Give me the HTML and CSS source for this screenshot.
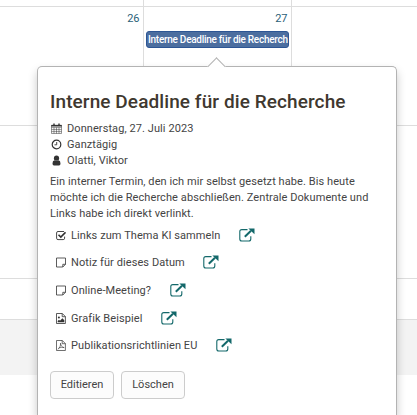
FILE: index.html
```html
<!DOCTYPE html>
<html lang="de">
<head>
<meta charset="utf-8">
<title>Kalender</title>
<link rel="stylesheet" href="styles.css">
</head>
<body>
<svg class="sprite" aria-hidden="true">
  <symbol id="open" viewBox="0 0 16 14">
    <path d="M8.5 1.6H2.8Q.8 1.6.8 3.6V11Q.8 13 2.8 13H9.8Q11.8 13 11.8 11V8.2" fill="none" stroke="currentColor" stroke-width="1.1"/>
    <path d="M5.8 8.8 12 2.7" fill="none" stroke="currentColor" stroke-width="2"/>
    <path d="M9.4.5h6.1v5.8z" fill="currentColor"/>
  </symbol>
  <symbol id="note" viewBox="0 0 10 11">
    <path d="M.5 1h9v6.3L6.8 10H.5zM9.5 7.3H6.8V10" fill="none" stroke="currentColor" stroke-width=".8"/>
  </symbol>
</svg>
<main class="calendar">
  <div class="week week-prev"><div></div><div></div><div></div></div>
  <div class="week week-current">
    <div class="day"><a class="num">26</a></div>
    <div class="day"><a class="num">27</a><div class="event">Interne Deadline für die Recherch</div></div>
    <div class="day"></div>
  </div>
  <div class="week week-next"></div>
  <div class="week week-last"></div>
  <div class="footer"></div>
</main>
<section class="popover">
  <h1>Interne Deadline für die Recherche</h1>
  <ul class="meta">
    <li><svg viewBox="0 0 11 11"><path d="M.5 2.2h10v8.3H.5zM.5 4.6h10M.5 6.6h10M.5 8.6h10M3 4.5v6M5.5 4.5v6M8 4.5v6" fill="none" stroke="currentColor" stroke-width=".5"/><path d="M.3 2h10.4v1.6H.3zM2.3.4h1.4v2.4H2.3zM7.3.4h1.4v2.4H7.3z" fill="currentColor"/></svg>Donnerstag, 27. Juli 2023</li>
    <li><svg viewBox="0 0 11 11"><circle cx="5.5" cy="5.5" r="4.3" fill="none" stroke="currentColor" stroke-width="1.2"/><path d="M5.7 3v2.8H3.5" fill="none" stroke="currentColor" stroke-width=".9"/></svg>Ganztägig</li>
    <li><svg viewBox="0 0 11 11"><circle cx="5.5" cy="3.2" r="2.6" fill="currentColor"/><path d="M3.4 5.2Q5.5 7 7.6 5.2 9.5 5.6 9.5 8.6 9.5 10.5 8 10.5H3Q1.5 10.5 1.5 8.6 1.5 5.6 3.4 5.2z" fill="currentColor"/></svg>Olatti, Viktor</li>
  </ul>
  <p>Ein interner Termin, den ich mir selbst gesetzt habe. Bis heute möchte ich die Recherche abschließen. Zentrale Dokumente und Links habe ich direkt verlinkt.</p>
  <ul class="links">
    <li><svg class="kind" viewBox="0 0 10 11"><path d="M8 1.5H2Q.6 1.5.6 2.9V8.2Q.6 9.6 2 9.6H7.2Q8.6 9.6 8.6 8.2V6.6" fill="none" stroke="currentColor" stroke-width=".9"/><path d="M2.5 4.7 4.8 7 9.5 2.3" fill="none" stroke="currentColor" stroke-width="1.6"/></svg><span>Links zum Thema KI sammeln</span><svg class="open"><use href="#open"/></svg></li>
    <li><svg class="kind"><use href="#note"/></svg><span>Notiz für dieses Datum</span><svg class="open"><use href="#open"/></svg></li>
    <li><svg class="kind"><use href="#note"/></svg><span>Online-Meeting?</span><svg class="open"><use href="#open"/></svg></li>
    <li><svg class="kind" viewBox="0 0 10 11"><path d="M.5.5H6.3L9.4 3.6V10.5H.5zM6.2.5V3.7H9.4" fill="none" stroke="currentColor" stroke-width=".8"/><circle cx="2.9" cy="4.6" r="1" fill="currentColor"/><path d="M1.7 9.3V8L3 6.8l1 .9L6.4 5.2 8.3 7.2V9.3z" fill="currentColor"/></svg><span>Grafik Beispiel</span><svg class="open"><use href="#open"/></svg></li>
    <li><svg class="kind" viewBox="0 0 10 11"><path d="M.5.5H6.3L9.4 3.6V10.5H.5zM6.2.5V3.7H9.4" fill="none" stroke="currentColor" stroke-width=".7"/><path d="M1.8 9.2C3.7 8.4 4.8 5.5 4.5 3.2 4.8 5.6 6 7.4 8.2 7.6 6.3 7.1 4.2 7.3 2.6 8.2" fill="none" stroke="currentColor" stroke-width=".6"/></svg><span>Publikationsrichtlinien EU</span><svg class="open"><use href="#open"/></svg></li>
  </ul>
  <div class="actions"><button>Editieren</button><button>Löschen</button></div>
</section>
</body>
</html>
```
FILE: styles.css
```css
* { box-sizing: border-box; }
body {
  margin: 0;
  height: 415px;
  overflow: hidden;
  position: relative;
  background: #fff;
  color: #444;
  font: 11px/16px Roboto, sans-serif;
}
.sprite { position: absolute; width: 0; height: 0; }
ul { list-style: none; margin: 0; padding: 0; }

.calendar { display: flex; flex-direction: column; height: 415px; }
.week { display: grid; grid-template-columns: 144px 148px 125px; border-bottom: 1px solid #ddd; }
.week-prev { height: 7px; }
.week-current { height: 119px; }
.week-next { height: 153px; }
.week-last { height: 41px; }
.week > div { border-right: 1px solid #ddd; }
.week > div:last-child { border-right: 0; }
.footer { height: 55px; background: #f3f3f3; }
.day { padding: 3px 2px 0; min-width: 0; }
.num { display: block; padding: 0 1.5px; text-align: right; line-height: 17px; color: #2b5f78; }
.event {
  height: 17px;
  margin-top: 4px;
  padding: 0 0 0 1px;
  overflow: hidden;
  white-space: nowrap;
  color: #fff;
  background: #4c6e9f;
  border: 1px solid #2c5594;
  border-radius: 3px;
  font-size: 10px;
  font-weight: 500;
  letter-spacing: -.27px;
  line-height: 16px;
}

.popover {
  position: absolute;
  left: 37px;
  top: 66px;
  width: 360px;
  height: 349px;
  padding: 24px 12px 0;
  background: #fff;
  border: 1px solid #b3b3b3;
  border-bottom: 0;
  border-radius: 5px 5px 0 0;
  box-shadow: 0 5px 10px rgba(0, 0, 0, .22);
  letter-spacing: .08px;
}
.popover::before {
  content: "";
  position: absolute;
  left: 172px;
  top: -7px;
  width: 12px;
  height: 12px;
  background: #fff;
  border: solid #b3b3b3;
  border-width: 1px 0 0 1px;
  transform: rotate(45deg);
}
h1 { margin: 0; font-size: 19px; font-weight: 500; line-height: 22px; letter-spacing: .09px; color: #40382f; white-space: nowrap; }
.meta { margin-top: 8px; }
.meta li { display: flex; align-items: center; height: 16px; }
.meta svg { width: 11px; height: 11px; margin: 0 5px 1px 1px; color: #333; }
.popover p { margin: 5px 0 0; width: 330px; }
.links { padding-left: 6px; }
.links li { display: flex; align-items: center; height: 27.6px; }
.kind { width: 10px; height: 11px; margin: 0 5px 1px 0; color: #333; }
.open { width: 16px; height: 14px; margin: 0 0 2px 18.5px; color: #13686a; }
.actions { display: flex; gap: 7px; margin-top: 11px; }
button {
  width: 64px;
  height: 28px;
  padding: 0;
  color: #444;
  background: #fcfcfc;
  border: 1px solid #ccc;
  border-radius: 4px;
  font: 11px/16px Roboto, sans-serif;
}
```
